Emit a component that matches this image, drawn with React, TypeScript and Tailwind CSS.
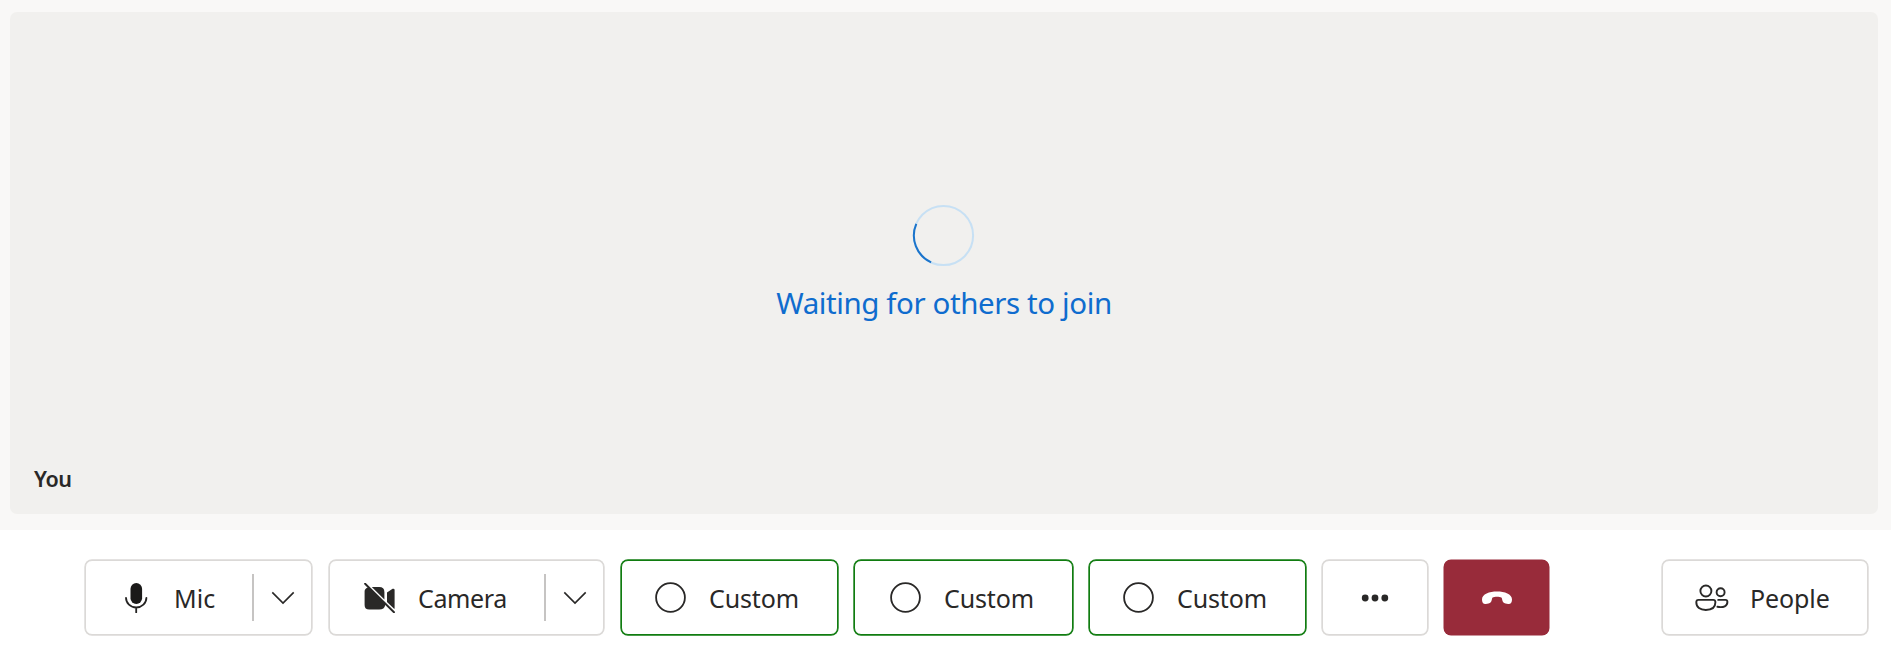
import React from "react";

const MicIcon = () => (
  <svg width="30" height="30" viewBox="0 0 30 30" fill="none" className="shrink-0">
    <rect x="9.5" y="0" width="11.6" height="21" rx="5.8" fill="#1b1a19" />
    <path d="M5 14.8A10.2 9.7 0 0 0 25.4 14.8M15.2 24.5V29.5" stroke="#252423" strokeWidth="1.8" strokeLinecap="round" />
  </svg>
);

const CameraOffIcon = () => (
  <svg width="32" height="30" viewBox="0 0 32 30" fill="none" className="shrink-0">
    <path
      d="M4.2 4.2L21.4 21.4Q20.4 26.6 15.2 26.6H5.2Q0.6 26.6 0.6 22V8.2Q0.6 5.6 4.2 4.2ZM7.8 4H15.2Q20.4 4 20.4 9V16.6ZM23 9.4L28.6 5.8Q30.4 5.2 30.6 6.8V25.4Q30.4 26.2 29.8 25.6L23 19Z"
      fill="#292827"
    />
    <path d="M1.1 0.7L30 29.3" stroke="#292827" strokeWidth="1.9" strokeLinecap="round" />
  </svg>
);

const CircleIcon = () => (
  <svg width="32" height="32" viewBox="0 0 32 32" fill="none" className="shrink-0">
    <circle cx="15.5" cy="15.5" r="14.4" stroke="#292827" strokeWidth="1.8" />
  </svg>
);

const ChevronIcon = () => (
  <svg width="24" height="14" viewBox="0 0 24 14" fill="none" className="shrink-0">
    <path d="M1.3 1.4L12 12.1L22.7 1.4" stroke="#292827" strokeWidth="1.6" />
  </svg>
);

const PeopleIcon = () => (
  <svg width="34" height="28" viewBox="0 0 34 28" fill="none" className="shrink-0">
    <g stroke="#292827" strokeWidth="1.9" strokeLinecap="round">
      <circle cx="10.9" cy="7" r="5.5" />
      <circle cx="25.6" cy="8.2" r="4" />
      <path d="M3.5 15.9H18.2Q20.4 15.9 20.4 18.3C20.4 23.4 16.5 26 10.8 26S1.3 23.4 1.3 18.3Q1.3 15.9 3.5 15.9Z" />
      <path d="M23.2 15.9H30.5Q32.4 15.9 32.4 18C32.4 21.9 28.7 23.9 22.4 22.8" />
    </g>
  </svg>
);

const HangUpIcon = () => (
  <svg width="32" height="16" viewBox="0 0 32 16" className="shrink-0">
    <path
      d="M1 9.4C1 4 8.4 1.5 16 1.5S31 4 31 9.4C31 12.2 30 14.1 27.2 13.9L24.5 13.6C22.4 13.2 21.7 12 21.2 9.8L20.7 7.7C19.4 7 17.7 6.8 16 6.8S12.6 7 11.3 7.7L10.8 9.8C10.3 12 9.6 13.2 7.5 13.6L4.8 13.9C2 14.1 1 12.2 1 9.4Z"
      fill="white"
    />
  </svg>
);

const MoreIcon = () => (
  <svg width="28" height="8" viewBox="0 0 28 8" fill="#292827" className="shrink-0">
    <circle cx="4.2" cy="4" r="3.4" />
    <circle cx="14" cy="4" r="3.4" />
    <circle cx="23.8" cy="4" r="3.4" />
  </svg>
);

const button = "flex h-[75px] shrink-0 items-center rounded-[7px]";
const neutral = "border border-[#dbd9d7] bg-white shadow-[0_0_0_0.7px_#dbd9d7]";

function SplitButton({ className, icon, label, labelClass }: { className: string; icon: React.ReactNode; label: string; labelClass: string }) {
  return (
    <div className={`${button} ${neutral} ${className}`}>
      <button className="flex flex-1 items-center">
        {icon}
        <span className={labelClass}>{label}</span>
      </button>
      <span className="h-[47px] w-[2px] shrink-0 bg-[#c6c4c3]" />
      <button className="flex h-full w-[57px] items-center justify-center">
        <ChevronIcon />
      </button>
    </div>
  );
}

function CustomButton({ className }: { className: string }) {
  return (
    <button className={`${button} border border-[#107c10] bg-white shadow-[0_0_0_0.7px_#107c10] ${className}`}>
      <CircleIcon />
      <span className="ml-[22px] tracking-[-0.15px]">Custom</span>
    </button>
  );
}

export default function App() {
  return (
    <div className="flex h-[648px] w-full flex-col bg-white font-['Noto_Sans','Open_Sans',sans-serif] text-[25px] leading-[36px] text-[#292827]">
      <main className="h-[530px] bg-[#f9f8f7] pt-3 pr-[13px] pb-4 pl-[10px]">
        <section className="flex h-full flex-col rounded-[7px] bg-[#f1f0ee]">
          <div className="flex flex-1 flex-col items-center pt-[192px]">
            <svg width="64" height="64" viewBox="0 0 64 64" fill="none">
              <circle cx="31.5" cy="31.5" r="29.6" stroke="#c7e0f4" strokeWidth="2" />
              <path d="M4.3 19.8A29.6 29.6 0 0 0 19.1 58.4" stroke="#1b74cb" strokeWidth="2" />
            </svg>
            <p className="mt-[15px] text-[29.5px] leading-[40px] tracking-[-0.4px] whitespace-nowrap text-[#0f6cce]">Waiting for others to join</p>
          </div>
          <div className="pb-[19px] pl-[24px] text-[21.5px] leading-8 font-semibold tracking-[-0.4px]">You</div>
        </section>
      </main>
      <footer className="flex items-start pt-[30px] pr-[23px] pl-[85px]">
        <SplitButton className="w-[227px]" icon={<span className="pl-[35px]"><MicIcon /></span>} label="Mic" labelClass="ml-[23px]" />
        <SplitButton className="ml-[17px] w-[275px]" icon={<span className="pl-[34px]"><CameraOffIcon /></span>} label="Camera" labelClass="ml-[22px] tracking-[-0.4px]" />
        <CustomButton className="ml-[17px] w-[217px] pl-[33px]" />
        <CustomButton className="ml-4 w-[219px] pl-[35px]" />
        <CustomButton className="ml-4 w-[217px] pl-[33px]" />
        <button className={`${button} ${neutral} ml-4 w-[106px] justify-center`} aria-label="More">
          <MoreIcon />
        </button>
        <button className={`${button} ml-4 w-[105px] justify-center bg-[#982b3a] shadow-[0_0_0_0.5px_#982b3a]`} aria-label="Leave">
          <HangUpIcon />
        </button>
        <button className={`${button} ${neutral} ml-auto w-[206px] pl-[32px]`}>
          <PeopleIcon />
          <span className="ml-[21px] tracking-[-0.1px]">People</span>
        </button>
      </footer>
    </div>
  );
}
